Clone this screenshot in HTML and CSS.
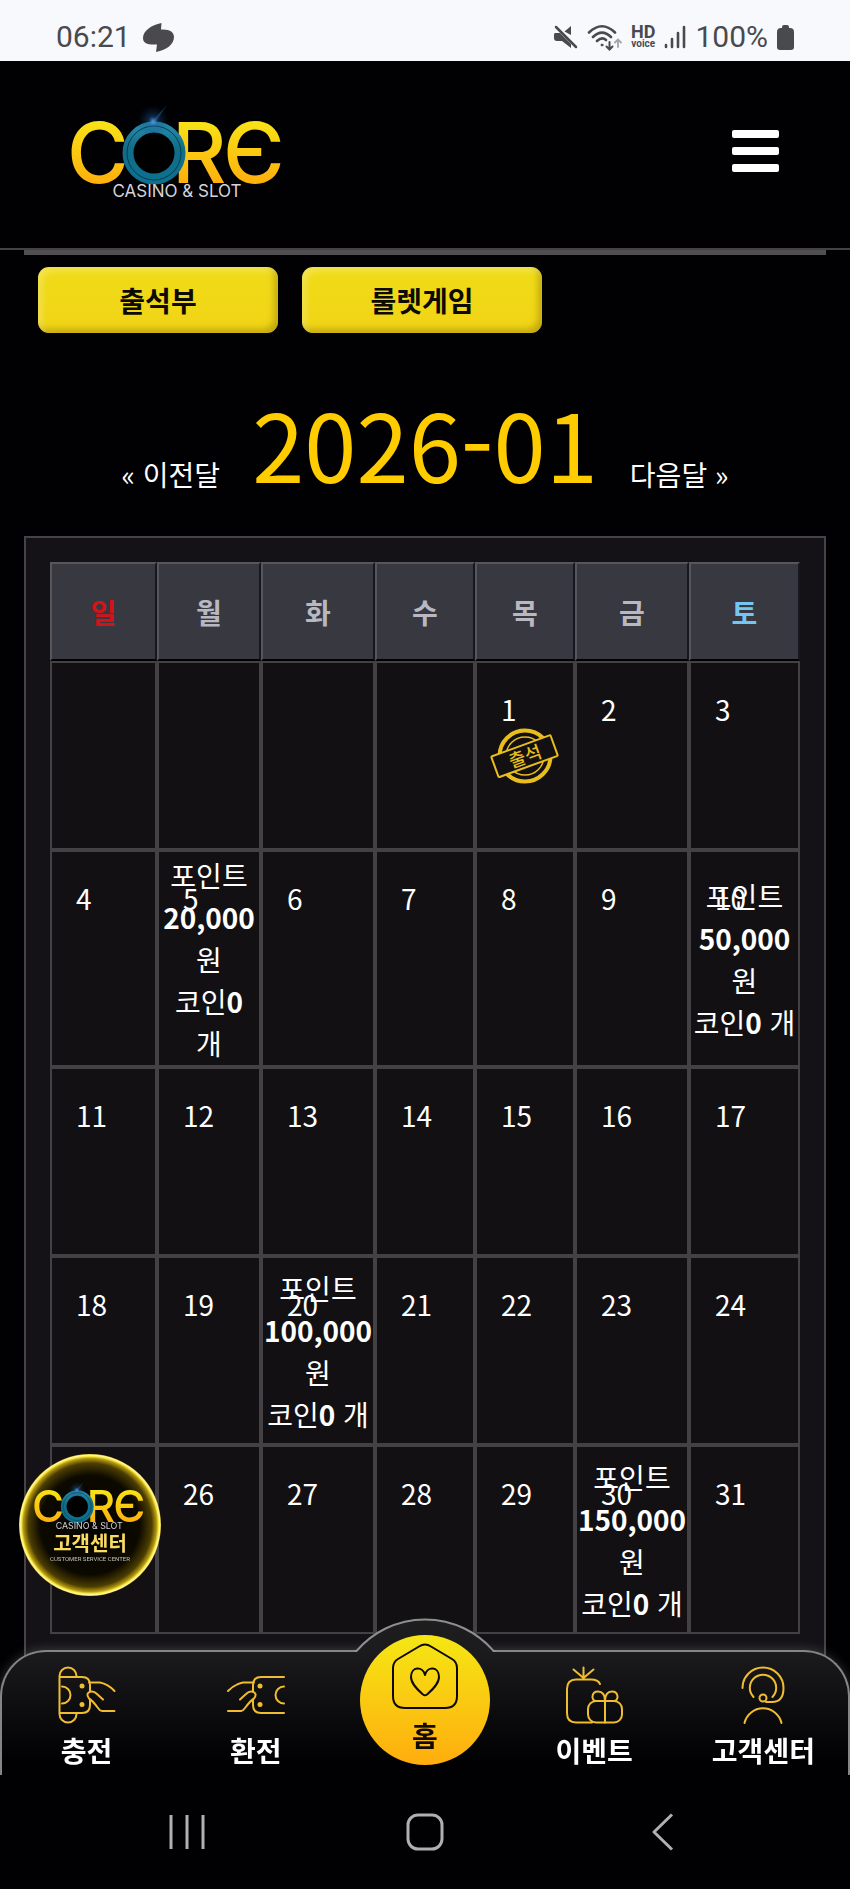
FILE: index.html
```html
<!DOCTYPE html>
<html lang="ko">
<head>
<meta charset="utf-8">
<meta name="viewport" content="width=device-width, initial-scale=1">
<title>CORE 출석부</title>
<link rel="stylesheet" href="styles.css">
</head>
<body>
<svg class="defs" aria-hidden="true">
  <defs>
    <linearGradient id="gold" x1="0" y1="0" x2="0" y2="1">
      <stop offset="0.1" stop-color="#f7ea18"/><stop offset="0.9" stop-color="#ffa80c"/>
    </linearGradient>
    <linearGradient id="teal" x1="0" y1="0" x2="0" y2="1">
      <stop offset="0" stop-color="#2487a8"/><stop offset="0.4" stop-color="#126d88"/><stop offset="1" stop-color="#0c708f"/>
    </linearGradient>
    <linearGradient id="bump" x1="0" y1="0" x2="0" y2="1">
      <stop offset="0" stop-color="#1e1e1f"/><stop offset="1" stop-color="#1b1a1c"/>
    </linearGradient>
    <radialGradient id="flare">
      <stop offset="0" stop-color="#6fb8ff" stop-opacity="0.8"/><stop offset="0.3" stop-color="#1c62a8" stop-opacity="0.4"/><stop offset="1" stop-color="#0a2c4c" stop-opacity="0"/>
    </radialGradient>
    <radialGradient id="orb">
      <stop offset="0" stop-color="#050300"/><stop offset="0.7" stop-color="#0c0900"/><stop offset="0.87" stop-color="#4b3d02"/><stop offset="0.94" stop-color="#b59a10"/><stop offset="0.965" stop-color="#f8e63c"/><stop offset="0.985" stop-color="#fffbb0"/><stop offset="1" stop-color="#d8bc22"/>
    </radialGradient>
    <symbol id="logo" viewBox="0 0 213 94">
      <text class="logo-letter" x="-4" y="79">C</text>
      <text class="logo-letter" x="101" y="79">R</text>
      <text class="logo-letter" x="152" y="79">Є</text>
      <circle cx="83" cy="49" r="26" fill="#000" stroke="url(#teal)" stroke-width="11"/>
      <circle cx="83" cy="49" r="27" fill="none" stroke="#053c50" stroke-width="1"/>
      <circle cx="82" cy="17" r="16" fill="url(#flare)"/>
      <path d="M80 18 96 1 84 19Z" fill="#3f8fd0" opacity="0.3"/>
      <text class="logo-sub" x="106" y="93">CASINO &amp; SLOT</text>
    </symbol>
  </defs>
</svg>

<div class="status">
  <div class="status-group">
    <span class="status-text">06:21</span>
    <svg width="31" height="29" viewBox="0 0 31 29"><path d="M18.500 0C8 2 0 8 0 15C0 20 4 22 14 21.500L13 29C24 27 31 21 31 14C31 9 27 6 18 6.500Z" fill="#4a4a4e"/></svg>
  </div>
  <div class="status-group status-right">
    <svg width="24" height="24" viewBox="0 0 24 24" fill="#4a4a4e"><path d="M17 1V10L10.500 6.500ZM1 8H6L17 19V23L8 16H3Q0 16 0 13V10Q0 8 1 8Z"/><path d="M2 2 22 22" stroke="#4a4a4e" stroke-width="2.500" stroke-linecap="round"/></svg>
    <svg width="35" height="27" viewBox="0 0 35 27" fill="none" stroke="#4a4a4e" stroke-width="2.600" stroke-linecap="round"><path d="M2 8.500Q15-4 28 8.500M6 13Q15 4 24 13M10 17Q15 12.500 19 16"/><circle cx="15" cy="21" r="1" fill="#4a4a4e" stroke-width="1"/><path d="M22.500 18V25M19.500 22.500 22.500 25.500 25.500 22.500" stroke-width="2"/><path d="M31 23V16M28 18.500 31 15.500 34 18.500" stroke="#a4a4aa" stroke-width="1.800"/></svg>
    <span class="hd"><b>HD</b><b class="hd-voice">voice</b></span>
    <svg width="22" height="24" viewBox="0 0 22 24" stroke="#4a4a4e" stroke-width="2.600" stroke-linecap="round"><path d="M2 20V22M8 14V22M14 8V22M20 2V22"/></svg>
    <span class="status-text">100%</span>
    <svg width="17" height="25" viewBox="0 0 17 25"><path d="M5 2Q5 0 7 0H10Q12 0 12 2V3H13Q17 3 17 7V22Q17 25 14 25H3Q0 25 0 22V7Q0 3 4 3H5Z" fill="#4a4a4e"/></svg>
  </div>
</div>

<header class="header">
  <a href="#" aria-label="CORE CASINO &amp; SLOT"><svg class="logo" width="213" height="94"><use href="#logo"/></svg></a>
  <button class="menu" type="button" aria-label="메뉴"><i></i><i></i><i></i></button>
</header>

<main class="main">
  <div class="tabs">
    <button class="tab" type="button">출석부</button>
    <button class="tab" type="button">룰렛게임</button>
  </div>
  <div class="month">
    <a href="#">« 이전달</a>
    <h1>2026-01</h1>
    <a href="#">다음달 »</a>
  </div>
  <section class="frame">
    <table class="calendar">
      <colgroup><col class="c1"><col class="c2"><col class="c3"><col class="c4"><col class="c4"><col class="c3"><col class="c7"></colgroup>
      <thead><tr><th class="sun">일</th><th>월</th><th>화</th><th>수</th><th>목</th><th>금</th><th class="sat">토</th></tr></thead>
      <tbody>
        <tr><td></td><td></td><td></td><td></td>
          <td><span class="day">1</span>
            <svg class="stamp" width="70" height="58" viewBox="0 0 70 58"><g fill="none" stroke="#e8bd1c"><circle cx="35" cy="29" r="25.500" stroke-width="4"/><circle cx="35" cy="29" r="19" stroke-width="1.500"/></g><g transform="rotate(-20 35 29)"><rect x="3" y="18" width="63" height="22" rx="1" fill="#121012" stroke="#e8bd1c" stroke-width="2"/><text class="stamp-text" x="35" y="36">출석</text></g></svg></td>
          <td><span class="day">2</span></td><td><span class="day">3</span></td></tr>
        <tr class="tall"><td><span class="day">4</span></td><td><span class="day">5</span>포인트<br><b>20,000</b><br>원<br>코인<b>0</b><br>개</td><td><span class="day">6</span></td><td><span class="day">7</span></td><td><span class="day">8</span></td><td><span class="day">9</span></td><td><span class="day">10</span>포인트<br><b>50,000</b><br>원<br>코인<b>0</b> 개</td></tr>
        <tr><td><span class="day">11</span></td><td><span class="day">12</span></td><td><span class="day">13</span></td><td><span class="day">14</span></td><td><span class="day">15</span></td><td><span class="day">16</span></td><td><span class="day">17</span></td></tr>
        <tr><td><span class="day">18</span></td><td><span class="day">19</span></td><td><span class="day">20</span>포인트<br><b>100,000</b><br>원<br>코인<b>0</b> 개</td><td><span class="day">21</span></td><td><span class="day">22</span></td><td><span class="day">23</span></td><td><span class="day">24</span></td></tr>
        <tr><td><span class="day">25</span></td><td><span class="day">26</span></td><td><span class="day">27</span></td><td><span class="day">28</span></td><td><span class="day">29</span></td><td><span class="day">30</span>포인트<br><b>150,000</b><br>원<br>코인<b>0</b> 개</td><td><span class="day">31</span></td></tr>
      </tbody>
    </table>
  </section>
</main>

<a class="support" href="#" aria-label="고객센터">
  <svg width="142" height="142" viewBox="0 0 142 142">
    <circle cx="71" cy="71" r="71" fill="url(#orb)"/>
    <use href="#logo" x="15" y="27" width="111" height="49"/>
    <text class="support-name" x="71" y="97">고객센터</text>
    <text class="support-sub" x="71" y="107">CUSTOMER SERVICE CENTER</text>
  </svg>
</a>

<div class="dock">
  <nav class="nav">
    <svg class="bump" width="142" height="36" viewBox="0 0 142 36"><path d="M0 33.500H2.500A90 90 0 0 1 139.500 33.500H142V36H0Z" fill="url(#bump)"/><path d="M0 33H2.500A90 90 0 0 1 139.500 33H142" fill="none" stroke="#8f8f90" stroke-width="2"/></svg>
    <a class="item" href="#">
      <svg class="icon" viewBox="0 0 58 58"><path d="M18.500 11V10A8.500 8.500 0 0 0 1.500 10V48A8.500 8.500 0 0 0 18.500 48V47M1.500 11H24Q32 11 32 19V25.500M1.500 47H24Q32 47 32 39V34M4 20.500A8.500 8.500 0 0 1 4 37.500M31 16.500H42Q50 18 56.500 25M56.500 45H44Q42 45 40 42Q34 34 31 32.500Q27 27 33 25.500Q36 25 39 28L45 33.500"/><circle class="dot" cx="24" cy="20" r="2.500"/><circle class="dot" cx="24" cy="38.500" r="2.500"/></svg>
      <span>충전</span>
    </a>
    <a class="item" href="#">
      <svg class="icon" viewBox="0 0 58 58"><path d="M57 11H34Q26 11 26 19V25.500M57 47H34Q26 47 26 39V34M57 20.500A8.500 8.500 0 0 0 57 37.500M27 16.500H16Q8 18 1 25M1 45H14Q16 45 18 42Q24 34 27 32.500Q31 27 25 25.500Q22 25 19 28L13 33.500"/><circle class="dot" cx="33" cy="20" r="2.500"/><circle class="dot" cx="33" cy="38.500" r="2.500"/></svg>
      <span>환전</span>
    </a>
    <a class="item home" href="#">
      <svg class="home-icon" viewBox="0 0 66 66"><path d="M27 3.500 6 16Q1 19 1 25V53Q1 65 13 65H53Q65 65 65 53V25Q65 19 60 16L39 3.500Q33 -0.500 27 3.500ZM33 32C31 23 19 23 19 34C19 41 26 47 31 51.500Q33 53 35 51.500C40 47 47 41 47 34C47 23 35 23 33 32Z"/></svg>
      <span>홈</span>
    </a>
    <a class="item" href="#">
      <svg class="icon" viewBox="0 0 58 58"><path d="M35 18Q33 13.500 26 13.500H11Q2 13.500 2 23V47Q2 56.500 11 56.500H27M18.500 12V1.500M18.500 12 8.500 3.500M18.500 12 28.500 3.500"/><rect x="23" y="35" width="34" height="21.500" rx="8"/><path d="M40 35V56.500M40 35C40 28 37 25.500 33 25.500C26 25.500 26 35 31 35M40 35C40 28 43 25.500 47 25.500C54 25.500 54 35 49 35"/></svg>
      <span>이벤트</span>
    </a>
    <a class="item" href="#">
      <svg class="icon" viewBox="0 0 58 58"><path d="M8.500 22A20.500 20.500 0 0 1 49.500 22Q49.500 36 38 36H32M19.500 31A13.200 13.200 0 1 1 38.500 31M10.500 57A19 19 0 0 1 47.500 57"/><circle cx="29" cy="32" r="3.500"/></svg>
      <span>고객센터</span>
    </a>
  </nav>
  <div class="system">
    <button type="button" aria-label="최근 앱"><svg width="36" height="38" viewBox="0 0 36 38"><path d="M2 2V36M18 2V36M34 2V36"/></svg></button>
    <button type="button" aria-label="홈 화면"><svg width="38" height="38" viewBox="0 0 38 38"><rect x="2" y="2" width="34" height="34" rx="10"/></svg></button>
    <button type="button" aria-label="뒤로"><svg width="22" height="38" viewBox="0 0 22 38"><path d="M20 1.500 2 19 20 36.500"/></svg></button>
  </div>
</div>
</body>
</html>
```
FILE: styles.css
```css
* { box-sizing: border-box; }
body {
  margin: 0;
  min-height: 100vh;
  background: #010003;
  color: #fff;
  font: 28px/42px "Noto Sans CJK KR", sans-serif;
}
a { color: inherit; text-decoration: none; }
button { font: inherit; border: 0; padding: 0; background: none; cursor: pointer; }
.defs { position: absolute; width: 0; height: 0; }

.status {
  display: flex;
  justify-content: space-between;
  align-items: center;
  height: 61px;
  padding: 13px 56px 0;
  background: #f8f9fd;
  color: #4a4a4e;
}
.status-group { display: flex; align-items: center; gap: 12px; }
.status-right { gap: 9px; }
.status-text { font: 30px/36px Roboto, sans-serif; }
.hd { display: flex; flex-direction: column; align-items: center; font: 18px/14px Roboto, sans-serif; }
.hd-voice { font-size: 10px; line-height: 10px; }

.header {
  display: flex;
  justify-content: space-between;
  align-items: center;
  height: 189px;
  padding: 0 71px 8px;
  border-bottom: 2px solid #434244;
}
.logo { display: block; }
.logo-letter { font: 500 84px Inter, sans-serif; fill: url(#gold); stroke: none; }
.logo-sub { font: 17px Inter, sans-serif; fill: #d4d4d8; text-anchor: middle; }
.menu { display: flex; flex-direction: column; gap: 9px; width: 47px; }
.menu i { height: 8px; border-radius: 2px; background: #fff; }

.main { margin: 0 24px; border-top: 5px solid #514f51; }
.tabs { display: flex; gap: 24px; padding: 12px 14px 0; }
.tab {
  flex: 0 1 240px;
  height: 66px;
  border-radius: 11px;
  background: linear-gradient(#f0dc18, #f0d416);
  box-shadow: inset 4px 4px 6px rgba(255, 255, 255, .25), inset -4px -4px 6px rgba(110, 90, 0, .35);
  color: #0c0a02;
  font-weight: 700;
}
.month {
  display: flex;
  justify-content: center;
  align-items: flex-end;
  gap: 32px;
  padding: 61px 0 46px;
}
.month a { line-height: 32px; }
.month h1 { margin: 0; font-size: 94px; line-height: 96px; font-weight: 400; color: #fc0; }

.frame { padding: 24px; border: 2px solid #454345; background: #141216; }
.calendar { width: 100%; table-layout: fixed; border-collapse: separate; border-spacing: 0; text-align: center; }
.c1 { width: 107px; }
.c2 { width: 104px; }
.c3 { width: 114px; }
.c4 { width: 100px; }
.c7 { width: 111px; }
.calendar th {
  height: 99px;
  padding: 0;
  border: 2px solid;
  border-color: #56565c #171722 #000 #56565c;
  background: #383841;
  color: #b9b8c0;
}
.calendar .sun { color: #d0141a; }
.calendar .sat { color: #74c6f2; }
.calendar td {
  position: relative;
  height: 189px;
  padding: 0;
  border: 2px solid #434144;
  background: #121012;
  vertical-align: middle;
  white-space: nowrap;
}
.calendar .tall td { height: 217px; }
.day { position: absolute; top: 25px; left: 24px; }
.stamp { display: block; margin: 0 auto; }
.stamp-text { font: 500 18px "Noto Sans CJK KR", sans-serif; fill: #e8bd1c; text-anchor: middle; }

.support { position: fixed; left: 19px; bottom: 293px; z-index: 2; }
.support svg { display: block; }
.support-name { font: 700 20px "Noto Sans CJK KR", sans-serif; fill: #f8dc62; text-anchor: middle; }
.support-sub { font: 6px Roboto, sans-serif; fill: #c4c0b4; text-anchor: middle; }

.dock { position: fixed; left: 0; right: 0; bottom: 0; background: linear-gradient(transparent 60px, #000 60px); }
.nav {
  position: relative;
  display: grid;
  grid-template-columns: repeat(5, 1fr);
  height: 125px;
  border: 2px solid #858587;
  border-bottom: 0;
  border-radius: 46px 46px 0 0;
  background: linear-gradient(#1b1a1c, #0c0b0d 50%, #010003 90%);
  box-shadow: 0 0 12px rgba(200, 200, 200, .25);
}
.bump { position: absolute; left: calc(50% - 71px); top: -34px; }
.item { position: relative; display: flex; flex-direction: column; align-items: center; padding-top: 14px; font-weight: 700; line-height: 40px; gap: 6px; }
.icon { width: 58px; height: 58px; fill: none; stroke: #f0bd30; stroke-width: 2; stroke-linecap: round; stroke-linejoin: round; }
.dot { fill: #f0bd30; stroke: none; }
.home {
  justify-self: center;
  width: 130px;
  height: 130px;
  margin-top: -17px;
  padding-top: 8px;
  border-radius: 50%;
  background: linear-gradient(#f5e714, #ffad0e);
  color: #120c00;
}
.home-icon { width: 66px; height: 66px; fill: none; stroke: #0c0800; stroke-width: 2; stroke-linejoin: round; }
.system {
  position: relative;
  display: grid;
  grid-template-columns: repeat(3, 1fr);
  place-items: center;
  height: 114px;
  padding: 0 8%;
  background: #010003;
}
.system svg { display: block; fill: none; stroke: #b0b0b2; stroke-width: 3; stroke-linejoin: round; }
```
